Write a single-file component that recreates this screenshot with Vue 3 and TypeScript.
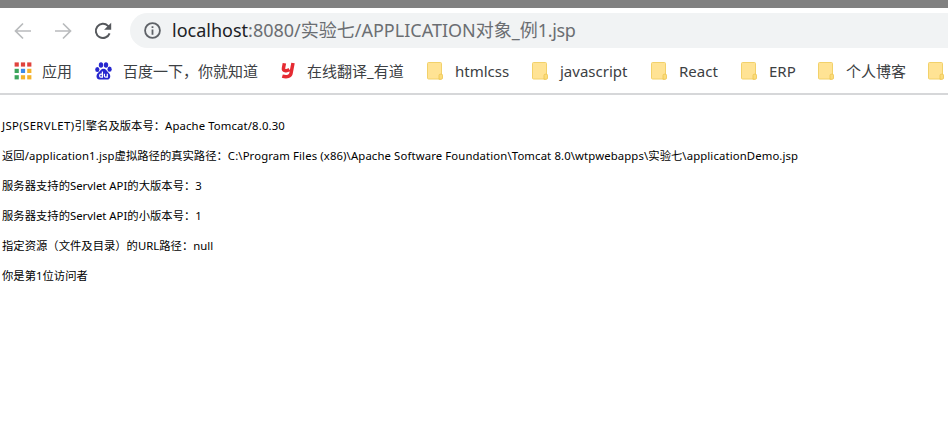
<script setup lang="ts">
type Icon = 'apps' | 'baidu' | 'youdao' | 'folder'
interface Bookmark { icon: Icon; label: string }
interface Run { text: string; latin: boolean }
interface Line { text: string; spacing: 'plain' | 'loose' }

const bookmarks: Bookmark[] = [
  { icon: 'apps', label: '应用' },
  { icon: 'baidu', label: '百度一下，你就知道' },
  { icon: 'youdao', label: '在线翻译_有道' },
  { icon: 'folder', label: 'htmlcss' },
  { icon: 'folder', label: 'javascript' },
  { icon: 'folder', label: 'React' },
  { icon: 'folder', label: 'ERP' },
  { icon: 'folder', label: '个人博客' },
  { icon: 'folder', label: '' },
]

const appColors = ['#e0433d', '#e0433d', '#e0433d', '#3ba55c', '#3c8bea', '#f4b32c', '#3ba55c', '#f4b32c', '#f4b32c']

const lines: Line[] = [
  { text: 'JSP(SERVLET)引擎名及版本号：Apache Tomcat/8.0.30', spacing: 'loose' },
  { text: '返回/application1.jsp虚拟路径的真实路径：C:\\Program Files (x86)\\Apache Software Foundation\\Tomcat 8.0\\wtpwebapps\\实验七\\applicationDemo.jsp', spacing: 'loose' },
  { text: '服务器支持的Servlet API的大版本号：3', spacing: 'plain' },
  { text: '服务器支持的Servlet API的小版本号：1', spacing: 'plain' },
  { text: '指定资源（文件及目录）的URL路径：null', spacing: 'plain' },
  { text: '你是第1位访问者', spacing: 'plain' },
]

// Latin and Chinese runs are spaced separately.
function runs(text: string): Run[] {
  return (text.match(/[\x20-\x7e]+|[^\x20-\x7e]+/g) ?? []).map((t) => ({
    text: t,
    latin: t.charCodeAt(0) < 127,
  }))
}

function isCaps(text: string): boolean {
  return text.length > 6 && text === text.toUpperCase()
}
</script>

<template>
  <div class="window">
    <div class="strip"></div>
    <header class="toolbar">
      <svg class="nav" viewBox="0 0 18 18"><path d="M17 9H2M9 1.5 1.5 9 9 16.5" fill="none" stroke="#b9bbbd" stroke-width="1.7" /></svg>
      <svg class="nav" viewBox="0 0 18 18"><path d="M1 9h15M9 1.5 16.5 9 9 16.5" fill="none" stroke="#b9bbbd" stroke-width="1.7" /></svg>
      <svg class="nav" viewBox="0 0 18 18">
        <path d="M15.6 11.4A7.1 7.1 0 1 1 14 3.9L15.5 5.5" fill="none" stroke="#55585c" stroke-width="2" />
        <path d="M17.2 .7v7.1h-7.1z" fill="#55585c" />
      </svg>
      <div class="address">
        <svg class="info" viewBox="0 0 16 16">
          <circle cx="8" cy="8" r="7" fill="none" stroke="#5f6368" stroke-width="1.7" />
          <path d="M8 7v5M8 4v1.7" stroke="#5f6368" stroke-width="1.7" />
        </svg>
        <span class="url"><span class="host">localhost</span>:8080/实验七/APPLICATION对象_例<span class="extension">1.jsp</span></span>
      </div>
    </header>
    <nav class="bookmarks">
      <div v-for="(b, i) in bookmarks" :key="i" class="bookmark" :class="b.icon">
        <svg v-if="b.icon === 'apps'" class="icon" viewBox="0 0 18 18">
          <rect v-for="(c, n) in appColors" :key="n" :x="0.6 + (n % 3) * 6.3" :y="0.4 + Math.floor(n / 3) * 6.4" width="4.2" height="4.2" :fill="c" />
        </svg>
        <svg v-else-if="b.icon === 'baidu'" class="icon" viewBox="0 0 18 18">
          <g fill="#2727cf">
            <ellipse cx="2.3" cy="7.5" rx="2.1" ry="2.6" />
            <ellipse cx="6" cy="3" rx="2.2" ry="2.8" />
            <ellipse cx="11" cy="3" rx="2.2" ry="2.8" />
            <ellipse cx="14.6" cy="7.2" rx="2.1" ry="2.6" />
            <path d="M8.5 6.8c2.4 0 3.1 2.1 5 3.9 2.8 2.4 2.2 6.7-1.2 6.9-1.5.1-2.2-.2-3.8-.2s-2.5.3-4 .2c-3.5-.2-4-4.7-1.1-7 2-1.6 2.7-3.8 5.1-3.8z" />
          </g>
          <path d="M7.4 9.6v5.6H5.9c-1.7 0-1.7-3 0-3h1.5M9.4 11.7v2.3c0 1.5 2.9 1.5 2.9 0v-2.3 4" fill="none" stroke="#fff" stroke-width="1.2" />
        </svg>
        <svg v-else-if="b.icon === 'youdao'" class="icon" viewBox="0 0 18 18">
          <path d="M3.4 1.2 2.5 6C2 8.8 5.2 9.6 8.4 7.6M12 1 10.1 11C9.6 14.4 6 15.4 1.3 14.1" fill="none" stroke="#e52b32" stroke-width="3.5" />
        </svg>
        <svg v-else class="icon" viewBox="0 0 18 18">
          <rect x=".5" y=".5" width="14" height="16.5" rx="1" fill="#ffe394" stroke="#f2d16a" />
          <path d="M12 17.2v-3.8q0-1.2 1.2-1.2h1.3q1 0 1 1V16q0 1.3-1.3 1.3H12z" fill="#fbdc7c" stroke="#edc44f" stroke-width=".8" />
        </svg>
        <span v-if="b.label" class="label">{{ b.label }}</span>
      </div>
    </nav>
    <main class="page">
      <p v-for="(line, i) in lines" :key="i" :class="line.spacing"><span v-for="(r, n) in runs(line.text)" :key="n" :class="{ latin: r.latin, caps: r.latin && isCaps(r.text) }">{{ r.text }}</span></p>
    </main>
  </div>
</template>

<style>
body { background: #fff; overflow: hidden; }
</style>

<style scoped>
.window { width: 948px; height: 434px; overflow: hidden; background: #fff; font-family: "Noto Sans", "Noto Sans CJK SC", sans-serif; }
.strip { height: 8px; background: #808080; }
.toolbar { display: flex; align-items: center; height: 45px; padding-left: 14px; }
.nav { flex: none; width: 18px; height: 18px; margin-right: 22px; }
.address { display: flex; align-items: center; flex: 1; height: 35px; margin-left: -4px; padding-left: 14px; border-radius: 18px 0 0 18px; background: #f1f3f4; }
.info { flex: none; width: 17px; height: 17px; }
.url { margin-left: 11px; font-size: 18px; line-height: 35px; color: #6b6e72; white-space: nowrap; }
.host { color: #202124; }
.extension { letter-spacing: -0.35px; }
.bookmarks { display: grid; grid-template-columns: 81px 186px 146px 105px 119px 90px 77px 110px 28px; height: 40px; box-sizing: border-box; padding: 0 0 4px 14px; align-items: center; }
.bookmark { display: flex; align-items: center; height: 36px; }
.icon { flex: none; width: 18px; height: 18px; }
.label { margin-left: 10px; font-size: 15px; line-height: 22px; color: #3c4043; white-space: nowrap; }
.youdao .label { margin-left: 8px; }
.page { height: 341px; box-sizing: border-box; border-top: 2px solid #d6d7d9; padding: 16px 0 0 2px; color: #000; font-size: 11.33px; }
.page p { margin: 0; height: 30px; line-height: 30px; white-space: nowrap; }
.loose .latin { letter-spacing: 0.12px; }
.loose .caps { letter-spacing: 0.38px; }
</style>
